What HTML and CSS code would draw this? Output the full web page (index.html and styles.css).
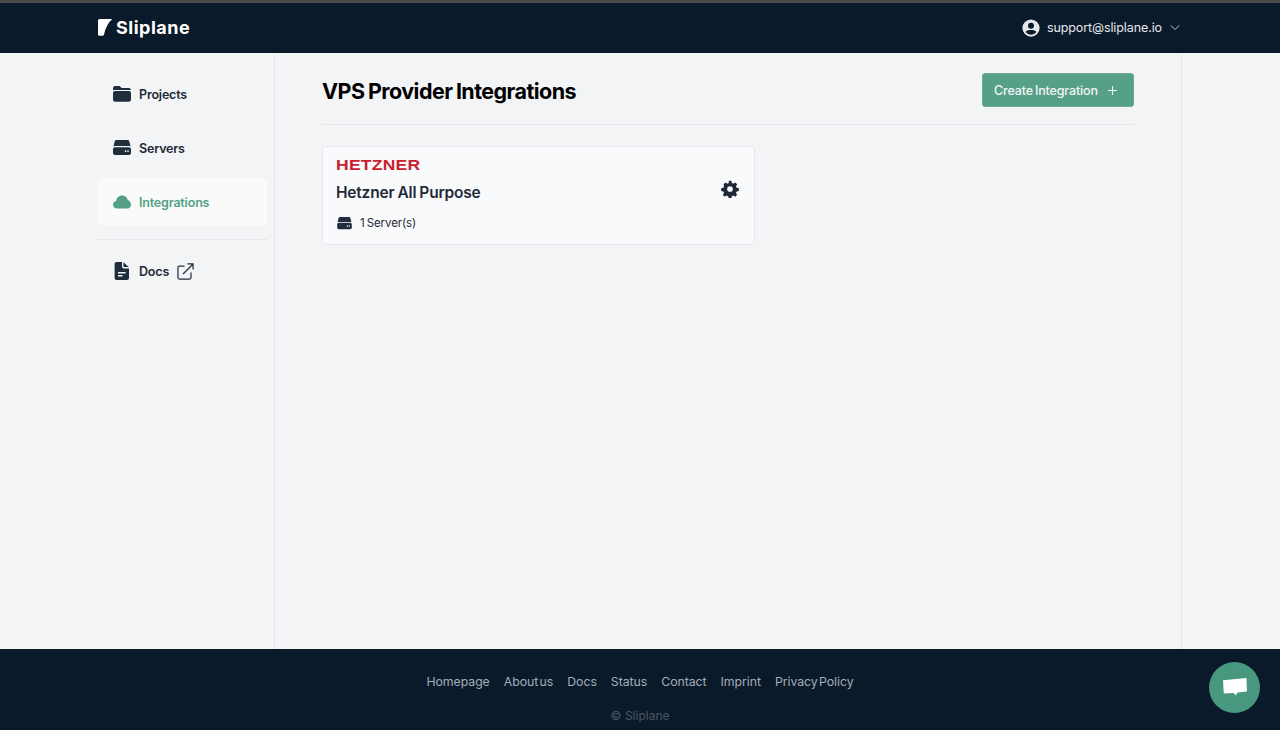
FILE: index.html
```html
<!DOCTYPE html>
<html lang="en">
<head>
<meta charset="utf-8">
<title>Sliplane</title>
<link rel="stylesheet" href="styles.css">
</head>
<body>
<div class="topstrip"></div>
<header class="header">
  <div class="header-inner">
    <a class="brand">
      <svg class="brand-mark" viewBox="0 0 14 17"><path d="M1.6 0H13.6Q14.2 0 13.9 .6Q8.6 4.8 6 15.6Q5.7 16.8 4.6 16.8H1.4Q0 16.8 0 15.4V1.6Q0 0 1.6 0Z"/></svg>
      <span>Sliplane</span>
    </a>
    <div class="user">
      <svg class="user-icon" viewBox="0 0 24 24"><path fill-rule="evenodd" d="M12 .5a11.5 11.5 0 1 0 0 23a11.5 11.5 0 0 0 0-23ZM12 5a4 4 0 1 1 0 8a4 4 0 0 1 0-8ZM12 21a9 9 0 0 1-7.2-3.6C5.8 15.6 9 14.8 12 14.8s6.2.8 7.2 2.6A9 9 0 0 1 12 21Z"/></svg>
      <span class="user-mail">support@sliplane.io</span>
      <svg class="chev" viewBox="0 0 12 8"><path d="M1 1.5 6 6.5 11 1.5"/></svg>
    </div>
  </div>
</header>
<div class="shell">
  <nav class="side">
    <a class="nav-item">
      <svg class="nav-icon" viewBox="0 0 18 16"><path d="M0 2.2C0 1 1 0 2.2 0H6.6L8.6 2.1H15.8C17 2.1 18 3 18 4.1H0Z"/><path d="M0 6.8C0 5.7 .9 4.9 2 4.9H16C17.1 4.9 18 5.7 18 6.8V13.6C18 14.9 17 15.8 15.8 15.8H2.2C1 15.8 0 14.9 0 13.6Z"/></svg>
      <span>Projects</span>
    </a>
    <a class="nav-item">
      <svg class="nav-icon" viewBox="0 0 18 16"><path d="M3.6 0H14.4C15.4 0 16 .5 16.3 1.4L17.6 6.4C17.1 6.1 16.6 6 16 6H2C1.4 6 .9 6.1 .4 6.4L1.7 1.4C2 .5 2.6 0 3.6 0Z"/><path fill-rule="evenodd" d="M2 7.2H16C17.1 7.2 18 8.1 18 9.2V13C18 14.1 17.1 15 16 15H2C.9 15 0 14.1 0 13V9.2C0 8.1 .9 7.2 2 7.2ZM12.6 10.2a.9.9 0 1 0 0 1.8a.9.9 0 0 0 0-1.8ZM15 10.2a.9.9 0 1 0 0 1.8a.9.9 0 0 0 0-1.8Z"/></svg>
      <span>Servers</span>
    </a>
    <a class="nav-item nav-active">
      <svg class="nav-icon" viewBox="0 0 18 16"><path d="M4.2 14.6C1.9 14.6 0 12.9 0 10.7C0 8.8 1.3 7.3 3.1 6.9C3.5 3.7 6 1.4 9.1 1.4C11.9 1.4 14.2 3.3 14.8 6C16.7 6.6 18 8.4 18 10.4C18 12.8 16.1 14.6 13.7 14.6Z"/></svg>
      <span>Integrations</span>
    </a>
    <div class="side-rule"></div>
    <a class="nav-item nav-docs">
      <svg class="nav-icon" viewBox="0 0 18 18"><path fill-rule="evenodd" d="M3.6 0H9V4.6C9 5.6 9.8 6.4 10.8 6.4H16V16C16 17.1 15.1 18 14 18H3.6C2.5 18 1.6 17.1 1.6 16V2C1.6 .9 2.5 0 3.6 0ZM5 10V11.4H12.6V10ZM5 13V14.4H9.6V13Z"/><path d="M10.4 .3 15.8 5H11.2C10.7 5 10.4 4.7 10.4 4.2Z"/></svg>
      <span>Docs</span>
      <svg class="ext-icon" viewBox="0 0 18 18"><path d="M8 3.2H2.6C1.7 3.2 1 3.9 1 4.8V15.4C1 16.3 1.7 17 2.6 17H13.2C14.1 17 14.8 16.3 14.8 15.4V10M6.4 11.6 17 1M11 1H17V7"/></svg>
    </a>
  </nav>
  <main class="main">
    <div class="page-head">
      <h1 class="page-title">VPS Provider Integrations</h1>
      <button class="create-btn">
        <span>Create Integration</span>
        <svg class="plus" viewBox="0 0 12 12"><path d="M6 1V11M1 6H11"/></svg>
      </button>
    </div>
    <article class="card">
      <div class="card-body">
        <div class="hetzner">HETZNER</div>
        <h2 class="card-title">Hetzner All Purpose</h2>
        <div class="card-meta">
          <svg class="meta-icon" viewBox="0 0 18 16"><path d="M3.6 0H14.4C15.4 0 16 .5 16.3 1.4L17.6 6.4C17.1 6.1 16.6 6 16 6H2C1.4 6 .9 6.1 .4 6.4L1.7 1.4C2 .5 2.6 0 3.6 0Z"/><path fill-rule="evenodd" d="M2 7.2H16C17.1 7.2 18 8.1 18 9.2V13C18 14.1 17.1 15 16 15H2C.9 15 0 14.1 0 13V9.2C0 8.1 .9 7.2 2 7.2ZM12.6 10.2a.9.9 0 1 0 0 1.8a.9.9 0 0 0 0-1.8ZM15 10.2a.9.9 0 1 0 0 1.8a.9.9 0 0 0 0-1.8Z"/></svg>
          <span>1 Server(s)</span>
        </div>
      </div>
      <svg class="gear" viewBox="0 0 24 24"><path fill-rule="evenodd" d="M10.2 1h3.6l.6 3c.7.2 1.4.5 2 .9l2.6-1.7 2.6 2.6-1.7 2.6c.4.6.7 1.3.9 2l3 .6v3.6l-3 .6c-.2.7-.5 1.4-.9 2l1.7 2.6-2.6 2.6-2.6-1.7c-.6.4-1.3.7-2 .9l-.6 3h-3.6l-.6-3c-.7-.2-1.4-.5-2-.9l-2.6 1.7-2.6-2.6 1.7-2.6c-.4-.6-.7-1.3-.9-2l-3-.6v-3.6l3-.6c.2-.7.5-1.4.9-2L3.4 5.8 6 3.2l2.6 1.7c.6-.4 1.3-.7 2-.9ZM12 8.2a3.8 3.8 0 1 0 0 7.6a3.8 3.8 0 0 0 0-7.6Z"/></svg>
    </article>
  </main>
</div>
<footer class="footer">
  <div class="foot-links">
    <a>Homepage</a><a>About us</a><a>Docs</a><a>Status</a><a>Contact</a><a>Imprint</a><a>Privacy Policy</a>
  </div>
  <div class="copy">© Sliplane</div>
</footer>
<button class="chat" aria-label="Chat">
  <svg viewBox="0 0 24 20"><path d="M0 2.2 23.4 0 24 13.6 14.6 14.4 12.8 17.6 10.6 15 .8 15.4Z"/></svg>
</button>
</body>
</html>
```
FILE: styles.css
```css
* { box-sizing: border-box; }
html, body { margin: 0; padding: 0; }
body {
  height: 730px;
  overflow: hidden;
  display: flex;
  flex-direction: column;
  position: relative;
  background: #f3f4f6;
  font-family: "Inter", "Noto Sans", sans-serif;
  color: #1f2937;
}
a { text-decoration: none; color: inherit; }
.topstrip { height: 3px; background: #4a4a4c; flex: none; }
.header { height: 50px; flex: none; background: #0b1a2a; }
.header-inner {
  width: 1084px;
  margin-left: 98px;
  height: 100%;
  padding-bottom: 1px;
  display: flex;
  align-items: center;
  justify-content: space-between;
}
.brand { display: flex; align-items: center; gap: 4px; color: #fff; font-weight: 700; font-size: 18px; letter-spacing: .5px; }
.brand-mark { width: 14px; height: 17px; fill: #fff; }
.user { display: flex; align-items: center; color: #e5e7eb; font-size: 12.5px; padding-right: 2px; }
.user-icon { width: 18px; height: 18px; fill: #e5e7eb; margin-right: 7px; }
.user-mail { letter-spacing: -.1px; }
.chev { width: 10px; height: 7px; margin-left: 8px; fill: none; stroke: #cbd5e1; stroke-width: 1.1; }
.shell { flex: 1; display: flex; width: 1084px; margin-left: 98px; }
.side { width: 177px; padding: 17px 7px 0 0; border-right: 1px solid #e5e7eb; flex: none; }
.nav-item {
  display: flex;
  align-items: center;
  height: 48px;
  margin-bottom: 6px;
  padding-left: 15px;
  border-radius: 6px;
  font-size: 12.5px;
  font-weight: 600;
  letter-spacing: -.18px;
  color: #1f2937;
}
.nav-icon { width: 18px; height: 16px; fill: #1f2d3d; margin-right: 8px; flex: none; }
.nav-active { background: #f9fbfb; color: #55a085; }
.nav-active .nav-icon { fill: #55a085; }
.side-rule { height: 1px; background: #e5e7eb; margin: 13px 0 7px; }
.nav-docs { height: 48px; }
.nav-docs .nav-icon { height: 18px; }
.ext-icon { width: 17px; height: 17px; margin-left: 8px; fill: none; stroke: #1f2d3d; stroke-width: 1.3; }
.main { flex: 1; padding: 20px 47px 0 47px; border-right: 1px solid #e5e7eb; }
.page-head {
  display: flex;
  align-items: center;
  justify-content: space-between;
  height: 52px;
  padding-bottom: 17px;
  border-bottom: 1px solid #e5e7eb;
  margin-bottom: 21px;
}
.page-title { margin: 2px 0 0; font-size: 21.5px; line-height: 30px; font-weight: 700; color: #000; letter-spacing: -.55px; word-spacing: -1px; }
.create-btn {
  display: flex;
  align-items: center;
  justify-content: space-between;
  width: 152px;
  height: 34px;
  padding: 0 15px 0 11px;
  border: 1px solid #6bab94;
  border-radius: 3px;
  background: #57a088;
  color: #f3f4f6;
  font-family: inherit;
  font-size: 12.5px;
  font-weight: 500;
  word-spacing: -1px;
  letter-spacing: -.16px;
}
.plus { width: 11px; height: 11px; fill: none; stroke: #f3f4f6; stroke-width: 1.2; }
.card {
  width: 433px;
  height: 99px;
  display: flex;
  align-items: center;
  justify-content: space-between;
  padding: 0 15px 0 13px;
  background: #f9fafb;
  border: 1px solid #e5e7eb;
  border-radius: 4px;
}
.card-body { display: flex; flex-direction: column; align-self: flex-start; padding-top: 11px; }
.hetzner {
  width: 84px;
  height: 14px;
  line-height: 14px;
  color: #c8202f;
  font-family: "Liberation Sans", sans-serif;
  font-weight: 700;
  font-size: 14px;
  letter-spacing: .2px;
  white-space: nowrap;
  transform: scaleX(1.25);
  transform-origin: left center;
}
.card-title { margin: 10px 0 0; font-size: 15.5px; font-weight: 600; line-height: 22px; letter-spacing: -.2px; word-spacing: -.6px; color: #1f2937; }
.card-meta { display: flex; align-items: center; margin-top: 10px; padding-left: 1px; font-size: 11.5px; line-height: 18px; color: #1f2937; word-spacing: -1px; letter-spacing: -.1px; }
.meta-icon { width: 15px; height: 13px; fill: #1f2d3d; margin-right: 8px; }
.gear { width: 18px; height: 18px; fill: #1f2937; margin-bottom: 13px; }
.footer { height: 81px; flex: none; background: #0b1a2a; display: flex; flex-direction: column; align-items: center; }
.foot-links { display: flex; gap: 14px; margin-top: 25px; font-size: 12.3px; line-height: 16px; color: #a3adb8; word-spacing: -2px; letter-spacing: -.05px; }
.copy { margin-top: 18px; font-size: 12px; line-height: 16px; color: #4b5563; }
.chat {
  position: absolute;
  left: 1209px;
  top: 662px;
  width: 51px;
  height: 51px;
  padding: 0;
  border: 0;
  border-radius: 50%;
  background: #48987f;
  display: flex;
  align-items: center;
  justify-content: center;
}
.chat svg { width: 24px; height: 20px; fill: #fff; }
```
